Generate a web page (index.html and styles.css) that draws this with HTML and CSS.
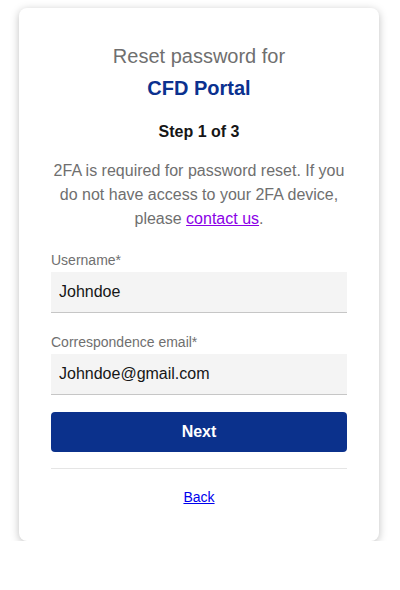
FILE: index.html
```html
<!DOCTYPE html>
<html lang="en">
<head>
    <meta charset="UTF-8">
    <title>Reset password</title>
    <link rel="stylesheet" href="styles.css">
</head>
<body>

<div class="card">
    <div class="heading">Reset password for</div>
    <div class="portal">CFD Portal</div>
    <div class="step">Step 1 of 3</div>
    <p class="note">2FA is required for password reset. If you do not have access to your 2FA device, please <a href="#" class="visited">contact us</a>.</p>

    <form class="form">
        <label class="field">
            <span class="label">Username*</span>
            <input class="input" type="text" value="Johndoe">
        </label>
        <label class="field">
            <span class="label">Correspondence email*</span>
            <input class="input" type="text" value="Johndoe@gmail.com">
        </label>
        <button class="btn" type="button">Next</button>
    </form>

    <div class="divider"></div>
    <div class="back"><a href="#">Back</a></div>
</div>

</body>
</html>
```

FILE: styles.css
```css
* {
    margin: 0;
    padding: 0;
    box-sizing: border-box;
}

body {
    font-family: "Liberation Sans", Arial, sans-serif;
    background: #fff;
    padding: 8px 0 0 19px;
}

.card {
    width: 360px;
    padding: 36px 32px 36px 32px;
    background: #fff;
    border-radius: 8px;
    box-shadow: 0 2px 8px rgba(0, 0, 0, 0.25);
    text-align: center;
}

.heading {
    font-size: 20px;
    line-height: 24px;
    color: #6f6f6f;
}

.portal {
    margin-top: 8px;
    font-size: 20px;
    line-height: 24px;
    font-weight: bold;
    color: #0b318f;
}

.step {
    margin-top: 20px;
    font-size: 16px;
    line-height: 24px;
    font-weight: bold;
    color: #161616;
}

.note {
    margin-top: 15px;
    font-size: 16px;
    line-height: 24px;
    color: #6f6f6f;
}

.note a.visited {
    color: #8a00e6;
}

.form {
    margin-top: 21px;
    text-align: left;
}

.field {
    display: block;
    margin-bottom: 21px;
}

.label {
    display: block;
    font-size: 14px;
    line-height: 16px;
    color: #6f6f6f;
    margin-bottom: 4px;
}

.input {
    display: block;
    width: 100%;
    height: 41px;
    padding: 0 8px;
    border: none;
    border-bottom: 1px solid #c6c6c6;
    background: #f4f4f4;
    font-family: inherit;
    font-size: 16px;
    color: #161616;
    outline: none;
}

.btn {
    display: block;
    width: 100%;
    height: 40px;
    margin-top: -4px;
    border: none;
    border-radius: 4px;
    background: #0b318c;
    color: #fff;
    font-family: inherit;
    font-size: 16px;
    font-weight: bold;
}

.divider {
    margin-top: 16px;
    height: 1px;
    background: #e5e5e5;
}

.back {
    margin-top: 20px;
    font-size: 14px;
    line-height: 16px;
}

.back a {
    color: #0000ee;
}
```
